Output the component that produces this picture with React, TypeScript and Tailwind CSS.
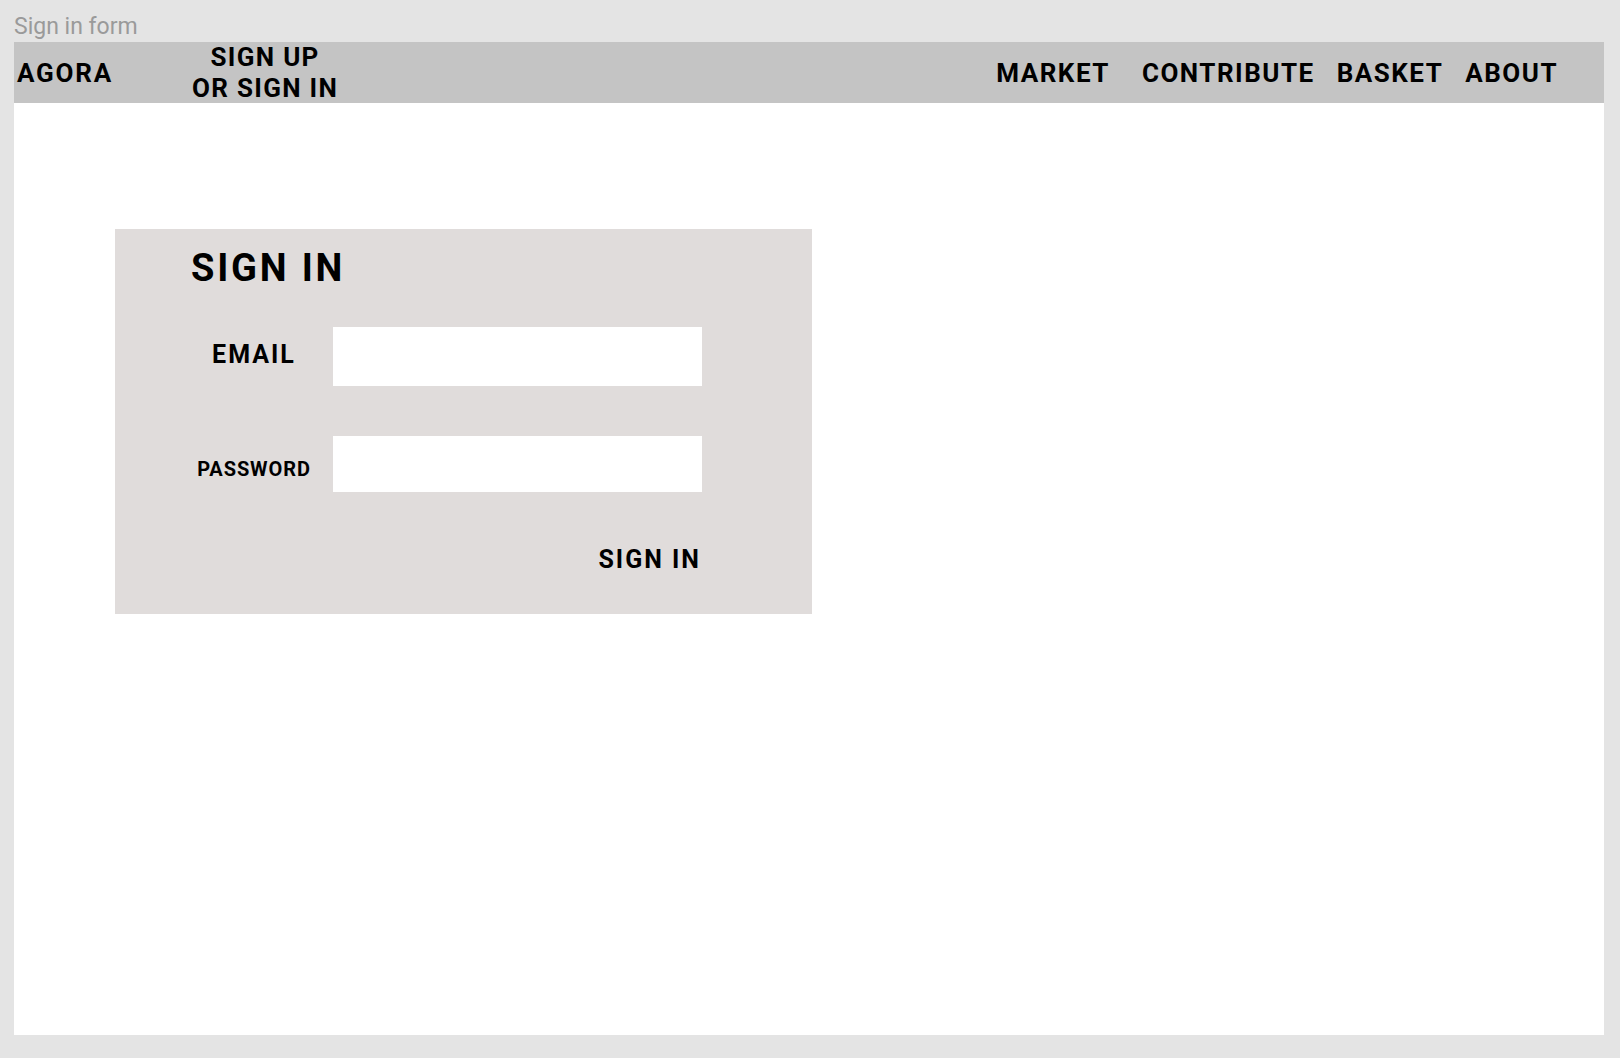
import React from 'react';

const navItems = [
  { label: 'MARKET', cls: 'mr-[32px]' },
  { label: 'CONTRIBUTE', cls: 'mr-[22px]' },
  { label: 'BASKET', cls: 'mr-[22px]' },
  { label: 'ABOUT', cls: '' },
];

export default function App() {
  return (
    <div
      className="w-full h-[1058px] bg-[#e4e4e4] flex flex-col"
      style={{ fontFamily: 'Roboto, "Noto Sans", sans-serif' }}
    >
      {/* Frame label */}
      <div className="h-[42px] pl-[14px] pt-[14px] text-[23px] leading-[26px] text-[#9a9a9a]">
        Sign in form
      </div>

      {/* Frame */}
      <div className="ml-[14px] mr-[16px] h-[993px] bg-white flex flex-col">
        {/* Nav bar */}
        <nav className="h-[61px] bg-[#c4c4c4] flex items-center font-bold text-black text-[26px]">
          <a className="pl-[3px] leading-[32px] tracking-[1.8px]">AGORA</a>
          <a className="ml-[79px] text-center leading-[31px] tracking-[1.3px]">
            SIGN UP
            <br />
            OR SIGN IN
          </a>
          <div className="ml-auto flex items-center pr-[46px] tracking-[1.5px]">
            {navItems.map((item) => (
              <a key={item.label} className={`leading-[32px] ${item.cls}`}>
                {item.label}
              </a>
            ))}
          </div>
        </nav>

        {/* Sign in card */}
        <div className="mt-[126px] ml-[101px] w-[697px] h-[385px] bg-[#e0dcdb] pl-[76px] pt-[20px] flex flex-col">
          <h1 className="text-[38px] leading-[38px] font-bold tracking-[2.8px] text-black">SIGN IN</h1>

          <div className="mt-[40px] flex items-start gap-[16px]">
            <label className="w-[126px] text-center pt-[15px] text-[25px] leading-[25px] font-bold tracking-[2px] text-black">
              EMAIL
            </label>
            <input type="email" className="w-[369px] h-[59px] bg-white outline-none px-3" />
          </div>

          <div className="mt-[50px] flex items-start gap-[16px]">
            <label className="w-[126px] text-center pt-[23px] text-[20px] leading-[20px] font-bold tracking-[0.9px] text-black">
              PASSWORD
            </label>
            <input type="password" className="w-[369px] h-[56px] bg-white outline-none px-3" />
          </div>

          <div className="w-[511px] mt-[55px] flex justify-end pr-[1px]">
            <button className="text-[25px] leading-[25px] font-bold tracking-[2px] text-black">SIGN IN</button>
          </div>
        </div>
      </div>
    </div>
  );
}
